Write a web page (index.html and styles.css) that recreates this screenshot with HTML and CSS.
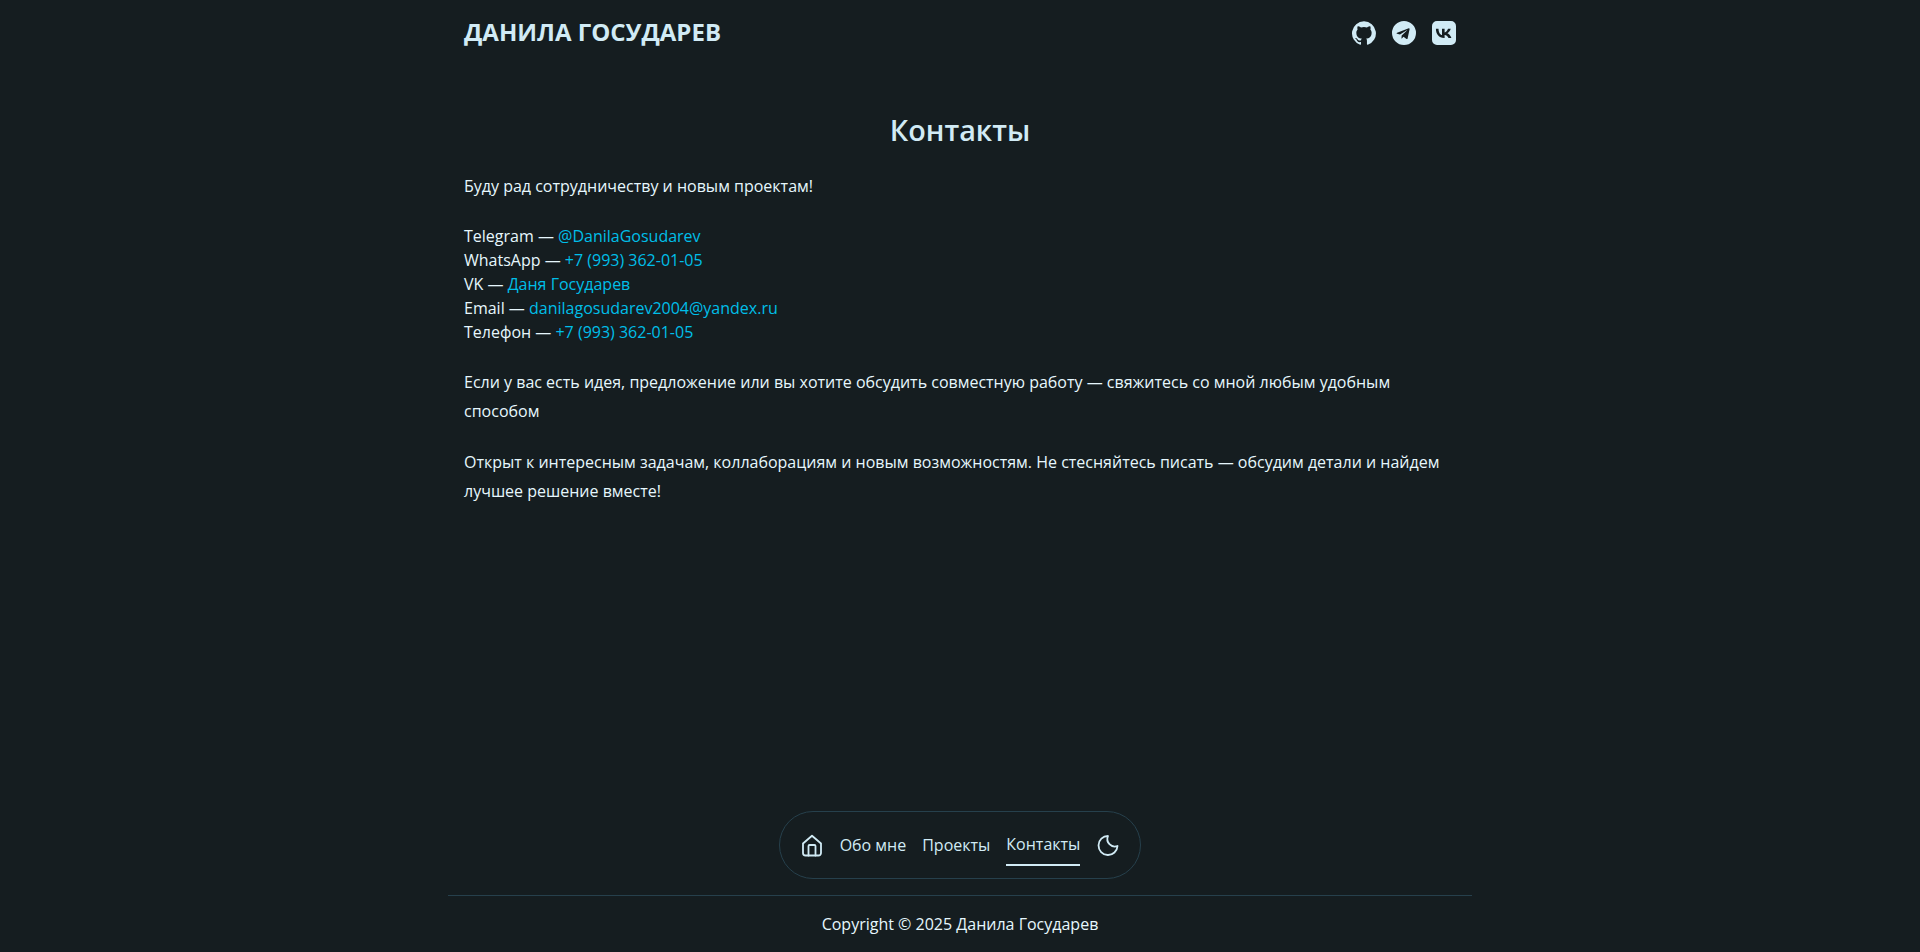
FILE: index.html
```html
<!DOCTYPE html>
<html lang="ru">
<head>
  <meta charset="UTF-8" />
  <title>Данила Государев - Контакты</title>
  <meta name="viewport" content="width=device-width, initial-scale=1" />
  <link rel="stylesheet" href="styles.css">
</head>
<body>
  <div class="page">
    <header class="site-header">
      <a class="logo" href="#">ДАНИЛА ГОСУДАРЕВ</a>
      <div class="socials">
        <a href="#" aria-label="GitHub">
          <svg viewBox="0 0 24 24" width="24" height="24"><path fill="currentColor" d="M12 .3a12 12 0 0 0-3.800 23.380c.6.120.830-.260.830-.570l-.020-2.040c-3.340.730-4.040-1.600-4.040-1.600-.550-1.400-1.330-1.770-1.330-1.770-1.090-.740.080-.730.080-.730 1.200.090 1.840 1.240 1.840 1.240 1.070 1.830 2.800 1.300 3.490 1 .1-.780.420-1.310.760-1.610-2.670-.3-5.470-1.330-5.470-5.930 0-1.310.470-2.380 1.240-3.220-.140-.3-.540-1.520.1-3.180 0 0 1.010-.320 3.300 1.230a11.500 11.500 0 0 1 6 0c2.280-1.550 3.290-1.230 3.290-1.230.640 1.660.240 2.880.120 3.180a4.650 4.650 0 0 1 1.230 3.220c0 4.610-2.800 5.630-5.480 5.920.420.360.810 1.100.810 2.220l-.010 3.290c0 .320.2.690.820.570A12 12 0 0 0 12 .3"/></svg>
        </a>
        <a href="#" aria-label="Telegram">
          <svg viewBox="0 0 24 24" width="24" height="24"><path fill="currentColor" d="M12 0a12 12 0 1 0 0 24 12 12 0 0 0 0-24zm5.560 8.160-1.970 9.280c-.150.660-.540.820-1.090.510l-3-2.210-1.450 1.390c-.160.160-.3.3-.6.3l.210-3.050 5.560-5.020c.240-.210-.050-.330-.370-.120l-6.870 4.330-2.960-.920c-.640-.2-.660-.640.130-.950l11.570-4.460c.540-.2 1.010.130.840.920z"/></svg>
        </a>
        <a href="#" aria-label="VK">
          <svg viewBox="0 0 24 24" width="24" height="24"><path fill="currentColor" fill-rule="evenodd" d="M5 0h14a5 5 0 0 1 5 5v14a5 5 0 0 1-5 5H5a5 5 0 0 1-5-5V5a5 5 0 0 1 5-5zm-1.100 7.700c.1 5.400 2.900 9.200 8.200 9.200h.5v-3c1.900.2 3.300 1.700 3.900 3h2.900c-.8-2.700-2.800-4.100-4-4.700 1.200-.7 2.900-2.400 3.300-4.500h-2.700c-.5 1.900-2.100 3.500-3.400 3.700V7.700H10v6.400c-1.600-.4-3.400-2.100-3.500-6.400z"/></svg>
        </a>
      </div>
    </header>

    <main class="content">
      <h1 class="section-title">Контакты</h1>
      <p class="intro">Буду рад сотрудничеству и новым проектам!</p>
      <ul class="contact-list">
        <li>Telegram — <a href="#">@DanilaGosudarev</a></li>
        <li>WhatsApp — <a href="#">+7 (993) 362-01-05</a></li>
        <li>VK — <a href="#">Даня Государев</a></li>
        <li>Email — <a href="#">danilagosudarev2004@yandex.ru</a></li>
        <li>Телефон — <a href="#">+7 (993) 362-01-05</a></li>
      </ul>
      <p class="text">Если у вас есть идея, предложение или вы хотите обсудить совместную работу — свяжитесь со мной любым удобным способом</p>
      <p class="text">Открыт к интересным задачам, коллаборациям и новым возможностям. Не стесняйтесь писать — обсудим детали и найдем лучшее решение вместе!</p>
    </main>

    <nav class="pill-nav">
      <a class="nav-icon" href="#" aria-label="Главная">
        <svg viewBox="0 0 24 24" width="24" height="24" fill="none" stroke="currentColor" stroke-width="1.800" stroke-linecap="round" stroke-linejoin="round"><path d="M3 10.500 12 2.800l9 7.700V20a2.500 2.500 0 0 1-2.500 2.500h-13A2.500 2.500 0 0 1 3 20z"/><path d="M8.500 22.500V13a1 1 0 0 1 1-1h5a1 1 0 0 1 1 1v9.500"/></svg>
      </a>
      <a class="nav-link" href="#">Обо мне</a>
      <a class="nav-link" href="#">Проекты</a>
      <a class="nav-link active" href="#">Контакты</a>
      <a class="nav-icon" href="#" aria-label="Тема">
        <svg viewBox="0 0 24 24" width="24" height="24" fill="none" stroke="currentColor" stroke-width="1.800" stroke-linecap="round" stroke-linejoin="round"><path d="M12 3a9.500 9.500 0 1 0 9.500 10A7.500 7.500 0 0 1 12 3z"/></svg>
      </a>
    </nav>

    <footer class="site-footer">Copyright © 2025 Данила Государев</footer>
  </div>
</body>
</html>
```

FILE: styles.css
```css
* {
  box-sizing: border-box;
}

body {
  margin: 0;
  background-color: #151d20;
  color: #d1ebf5;
  font-family: 'Open Sans', 'Noto Sans', sans-serif;
  font-size: 16px;
}

a {
  color: inherit;
  text-decoration: none;
}

.page {
  width: 1024px;
  min-height: 952px;
  margin: 0 auto;
  display: flex;
  flex-direction: column;
}

.site-header {
  height: 64px;
  padding: 0 16px;
  display: flex;
  align-items: center;
  justify-content: space-between;
}

.logo {
  font-size: 24px;
  font-weight: 700;
  margin-bottom: 2px;
}

.socials {
  display: flex;
  gap: 16px;
  margin-top: 1px;
}

.socials a {
  display: flex;
}

.content {
  flex-grow: 1;
  padding: 42px 16px 0;
  color: #e6f7fd;
}

.section-title {
  margin: 0 0 20px;
  font-size: 28.8px;
  line-height: 48px;
  font-weight: 600;
  text-align: center;
  color: #d1ebf5;
}

.intro {
  margin: 0 0 26px;
  line-height: 24px;
}

.contact-list {
  list-style: none;
  margin: 0 0 24px;
  padding: 0;
  line-height: 24px;
}

.contact-list a {
  color: #00bfe8;
}

.text {
  margin: 0 0 22px;
  line-height: 29px;
}

.pill-nav {
  align-self: center;
  width: 362px;
  height: 68px;
  border: 1px solid #26404c;
  border-radius: 34px;
  display: flex;
  align-items: center;
  justify-content: center;
  gap: 16px;
}

.nav-icon {
  display: flex;
}

.nav-link {
  position: relative;
  line-height: 24px;
}

.nav-link.active {
  margin-bottom: 2px;
}

.nav-link.active::after {
  content: "";
  position: absolute;
  left: 0;
  right: 0;
  bottom: -10px;
  height: 2px;
  background-color: #d1ebf5;
}

.site-footer {
  margin-top: 16px;
  height: 57px;
  border-top: 1px solid #26404c;
  display: flex;
  align-items: center;
  justify-content: center;
  color: #e6f7fd;
}
```
